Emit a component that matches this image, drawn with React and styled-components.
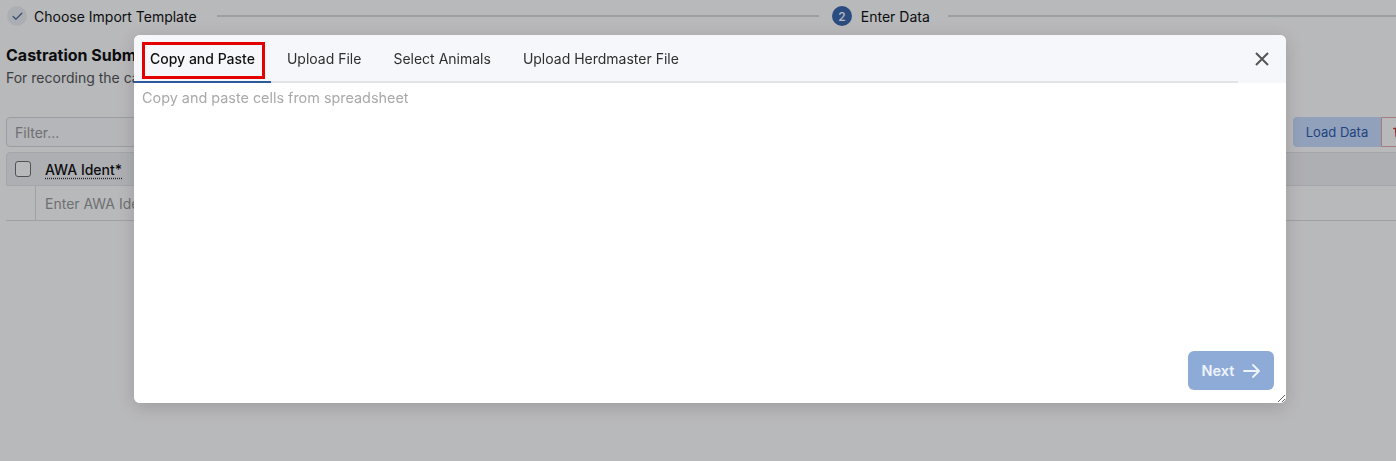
import React from 'react';
import styled, { createGlobalStyle } from 'styled-components';

const GlobalStyle = createGlobalStyle`
  html, body {
    margin: 0;
    padding: 0;
    overflow: hidden;
    background: #fff;
  }
  body {
    font-family: Inter, "Noto Sans", sans-serif;
    color: #111;
  }
  * { box-sizing: border-box; }
`

const Page = styled.div`
  width: 1723px;
  height: 461px;
  padding: 6px;
`

const Stepper = styled.div`
  display: flex;
  align-items: center;
  height: 20px;
  padding-left: 1px;
`

const Step = styled.div`
  display: flex;
  align-items: center;
  gap: ${p => p.$gap || 8}px;
  font-size: 14px;
  color: #111;
  white-space: nowrap;
`

const StepCircle = styled.div`
  width: 20px;
  height: 20px;
  border-radius: 50%;
  display: flex;
  align-items: center;
  justify-content: center;
  font-size: 12px;
  font-weight: 500;
  background: ${p => p.$active ? '#3c68ae' : '#eef0f3'};
  color: ${p => p.$active ? '#fff' : '#4e6a9c'};
`

const StepLine = styled.div`
  flex: 1;
  height: 2px;
  background: #d9dbdf;
  margin: 0 13px 0 ${p => p.$left || 20}px;
`

const Title = styled.h2`
  margin: 19px 0 0;
  font-size: 16px;
  line-height: 20px;
  font-weight: 700;
`

const Subtitle = styled.p`
  margin: 3px 0 0;
  font-size: 14px;
  line-height: 20px;
  color: #555;
`

const Toolbar = styled.div`
  display: flex;
  justify-content: space-between;
  align-items: center;
  margin-top: 29px;
  height: 30px;
`

const FilterInput = styled.input`
  width: 300px;
  height: 30px;
  border: 1px solid #d7d9dd;
  border-radius: 4px;
  padding: 0 8px;
  font: 14px Inter, sans-serif;
  background: #fbfbfc;
  &::placeholder { color: #9a9a9a; }
`

const ButtonRow = styled.div`
  display: flex;
  gap: 8px;
`

const ButtonGroup = styled.div`
  display: flex;
`

const ToolButton = styled.button`
  height: 30px;
  width: ${p => p.$w}px;
  display: flex;
  align-items: center;
  gap: 6px;
  font: 13px Inter, sans-serif;
  border-radius: ${p => p.$radius || '4px'};
  border: 1px solid ${p => p.$border || 'transparent'};
  background: ${p => p.$bg || '#fff'};
  color: ${p => p.$color || '#333'};
  padding: 0 10px;
  justify-content: ${p => p.$align || 'center'};
`

const Table = styled.div`
  margin-top: 5px;
`

const HeaderRow = styled.div`
  height: 34px;
  display: flex;
  align-items: center;
  gap: 14px;
  padding-left: 8px;
  background: #f1f2f4;
  border: 1px solid #e2e4e8;
  border-radius: 4px 4px 0 0;
  font-size: 14px;
  font-weight: 500;
`

const Checkbox = styled.span`
  width: 16px;
  height: 16px;
  border: 1px solid #6f7176;
  border-radius: 3px;
  background: #fff;
`

const HeaderLabel = styled.span`
  text-decoration: underline dotted #333;
  text-underline-offset: 3px;
`

const Row = styled.div`
  height: 35px;
  display: flex;
  border-bottom: 1px solid #dcdee2;
`

const IndexCell = styled.div`
  width: 30px;
  border-right: 1px solid #dcdee2;
`

const Cell = styled.div`
  display: flex;
  align-items: center;
  padding-left: 9px;
  font-size: 14px;
  color: #9a9a9a;
`

const Overlay = styled.div`
  position: fixed;
  inset: 0;
  background: rgba(0, 2, 10, 0.28);
  display: flex;
  align-items: flex-start;
  padding: 35px 0 0 134px;
`

const Modal = styled.div`
  width: 1152px;
  height: 368px;
  background: #fff;
  border-radius: 6px;
  overflow: hidden;
  box-shadow: 0 4px 18px rgba(0, 0, 0, 0.16);
  display: flex;
  flex-direction: column;
`

const ModalHeader = styled.div`
  display: flex;
  background: #f6f7fb;
  height: 48px;
  flex-shrink: 0;
`

const TabList = styled.div`
  flex: 1;
  display: flex;
  align-items: flex-start;
  border-bottom: 2px solid #e2e4e8;
`

const Tab = styled.div`
  position: relative;
  height: 48px;
  margin-bottom: -2px;
  padding: 1px 16px 0;
  display: flex;
  align-items: center;
  font-size: 14px;
  font-weight: ${p => p.$active ? 500 : 400};
  color: ${p => p.$active ? '#111' : '#2f2f2f'};
  border-bottom: 2px solid ${p => p.$active ? '#2d5a9c' : 'transparent'};
  white-space: nowrap;
`

const Highlight = styled.span`
  position: absolute;
  left: 8px;
  top: 7px;
  width: 123px;
  height: 37px;
  border: 3px solid #e40000;
  pointer-events: none;
`

const CloseButton = styled.button`
  width: 48px;
  height: 48px;
  border: none;
  background: transparent;
  display: flex;
  align-items: center;
  justify-content: center;
  padding: 0;
`

const ModalBody = styled.div`
  position: relative;
  flex: 1;
`

const PasteArea = styled.textarea`
  display: block;
  width: 100%;
  height: 100%;
  border: none;
  outline: none;
  padding: 4px 8px;
  font: 14.4px/22px Inter, sans-serif;
  color: #111;
  &::placeholder { color: #a9a9a9; }
`

const NextButton = styled.button`
  position: absolute;
  right: 12px;
  bottom: 13px;
  width: 86px;
  height: 39px;
  border: none;
  border-radius: 6px;
  background: #8eabd7;
  color: #eef3fb;
  font: 600 14.5px Inter, sans-serif;
  display: flex;
  align-items: center;
  justify-content: center;
  gap: 9px;
`

const CheckIcon = () => (
  <svg width="13" height="13" viewBox="0 0 24 24" fill="none" stroke="currentColor" strokeWidth="2.3" strokeLinecap="round" strokeLinejoin="round">
    <path d="M20 6 9 17l-5-5" />
  </svg>
)

const CloseIcon = () => (
  <svg width="16" height="16" viewBox="0 0 16 16" fill="none" stroke="#555" strokeWidth="2">
    <path d="M2 2 14 14M14 2 2 14" />
  </svg>
)

const ArrowIcon = () => (
  <svg width="17" height="14" viewBox="0 0 17 14" fill="none" stroke="currentColor" strokeWidth="1.8" strokeLinecap="round" strokeLinejoin="round">
    <path d="M1 7h15M10 1l6 6-6 6" />
  </svg>
)

const TrashIcon = () => (
  <svg width="14" height="14" viewBox="0 0 24 24" fill="none" stroke="#c0392b" strokeWidth="2.2" strokeLinecap="round">
    <path d="M3 6h18M8 6V4h8v2M6 6l1 14h10l1-14" />
  </svg>
)

const tabs = ['Copy and Paste', 'Upload File', 'Select Animals', 'Upload Herdmaster File']

export default function App() {
  return (
    <>
      <GlobalStyle />
      <Page>
        <Stepper>
          <Step $gap={7}>
            <StepCircle><CheckIcon /></StepCircle>
            Choose Import Template
          </Step>
          <StepLine $left={20} />
          <Step $gap={9}>
            <StepCircle $active>2</StepCircle>
            Enter Data
          </Step>
          <StepLine $left={18} />
          <Step>
            <StepCircle>3</StepCircle>
            Review and Submit
          </Step>
        </Stepper>
        <Title>Castration Submission</Title>
        <Subtitle>For recording the castration of animals in the herd</Subtitle>
        <Toolbar>
          <FilterInput placeholder="Filter..." />
          <ButtonRow>
            <ButtonGroup>
              <ToolButton $w={88} $bg="#cadeff" $color="#2f5cae" $radius="4px 0 0 4px">Load Data</ToolButton>
              <ToolButton $w={110} $border="#eaa9a9" $color="#c0392b" $radius="0 4px 4px 0" $align="flex-start"><TrashIcon />Clear Data</ToolButton>
            </ButtonGroup>
            <ToolButton $w={100} $border="#d7d9dd">Validate</ToolButton>
            <ToolButton $w={110} $bg="#3c68ae" $color="#fff">Submit</ToolButton>
          </ButtonRow>
        </Toolbar>
        <Table>
          <HeaderRow>
            <Checkbox />
            <HeaderLabel>AWA Ident*</HeaderLabel>
          </HeaderRow>
          <Row>
            <IndexCell />
            <Cell>Enter AWA Ident</Cell>
          </Row>
        </Table>
      </Page>
      <Overlay>
        <Modal>
          <ModalHeader>
            <TabList>
              {tabs.map((t, i) => (
                <Tab key={t} $active={i === 0}>
                  {t}
                  {i === 0 && <Highlight />}
                </Tab>
              ))}
            </TabList>
            <CloseButton><CloseIcon /></CloseButton>
          </ModalHeader>
          <ModalBody>
            <PasteArea placeholder="Copy and paste cells from spreadsheet" />
            <NextButton>Next <ArrowIcon /></NextButton>
          </ModalBody>
        </Modal>
      </Overlay>
    </>
  )
}
